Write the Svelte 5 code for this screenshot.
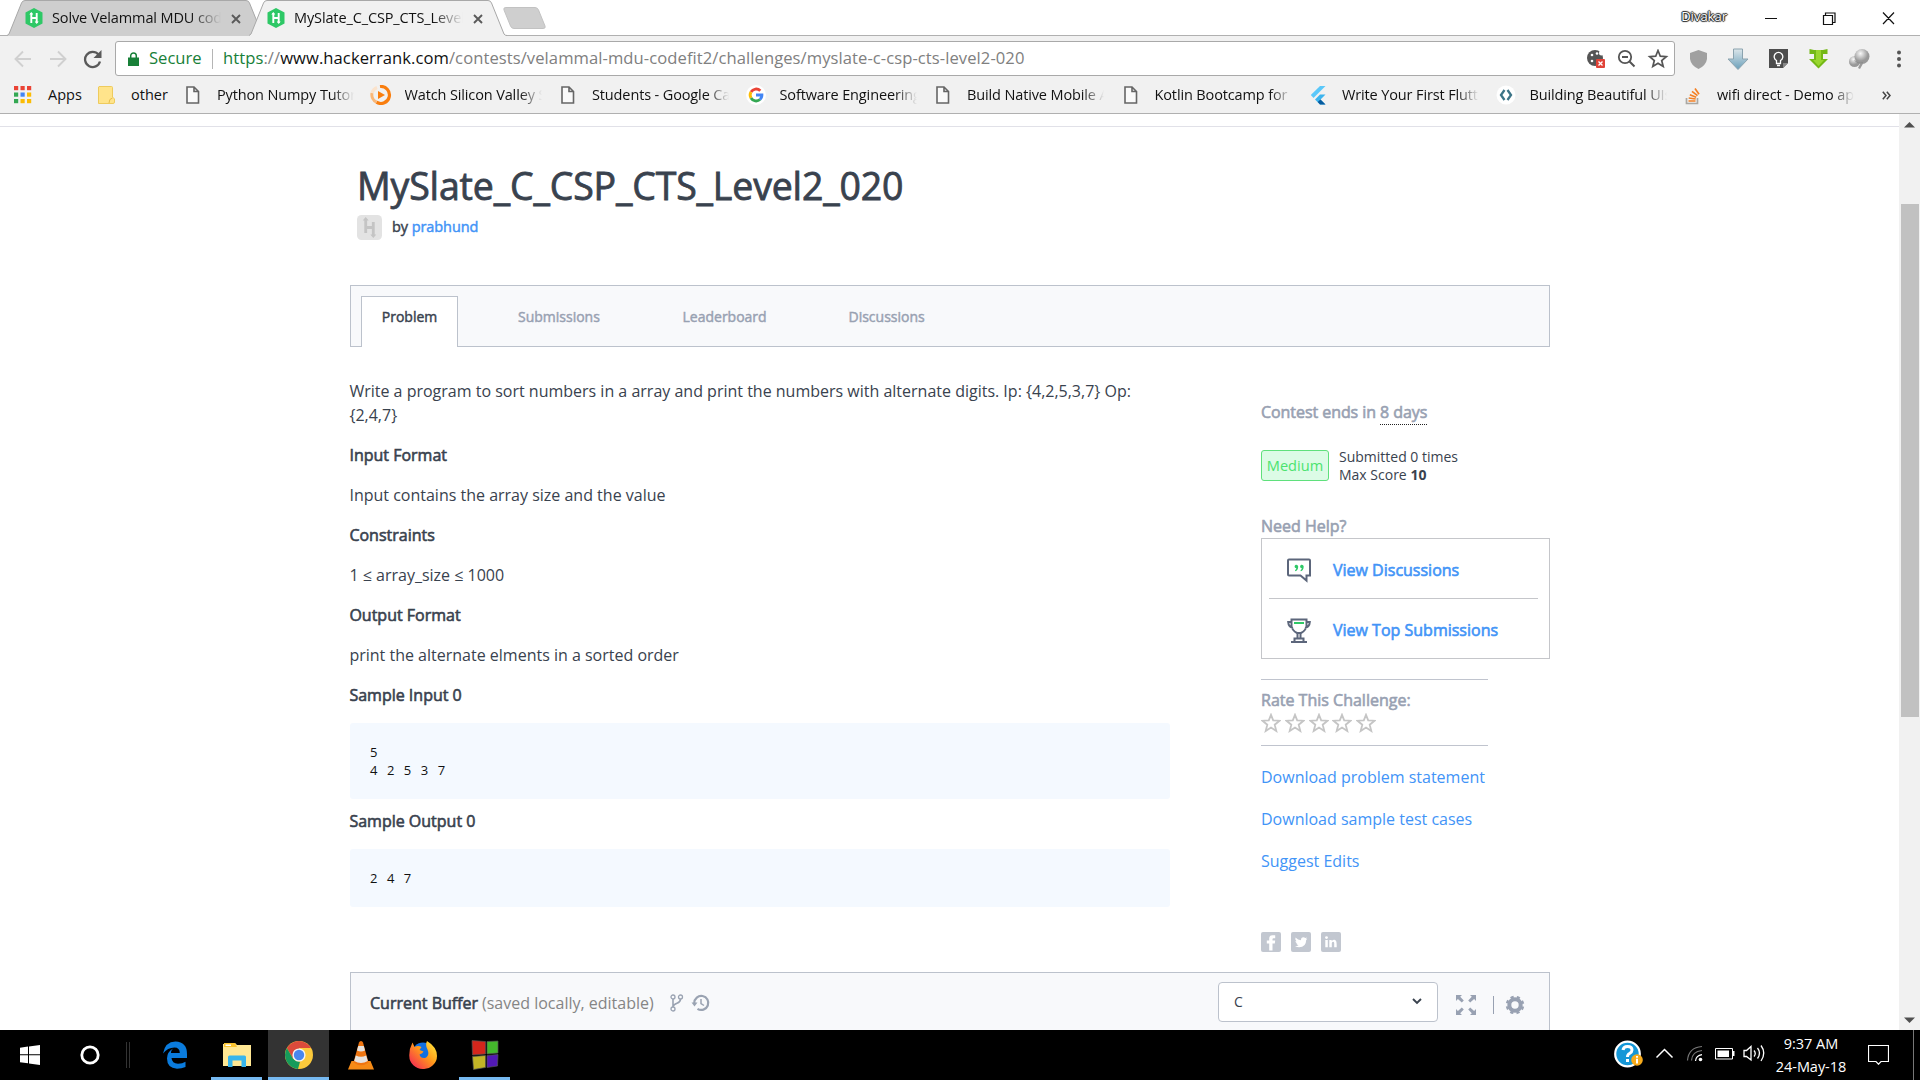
<script>
  const tabs = [
    { title: 'Solve Velammal MDU codefit', active: false },
    { title: 'MySlate_C_CSP_CTS_Level2', active: true }
  ];
  const bookmarks = [
    { icon: 'page', label: 'Python Numpy Tutorial' },
    { icon: 'watch', label: 'Watch Silicon Valley S' },
    { icon: 'page', label: 'Students - Google Cal' },
    { icon: 'google', label: 'Software Engineering' },
    { icon: 'page', label: 'Build Native Mobile Ap' },
    { icon: 'page', label: 'Kotlin Bootcamp for' },
    { icon: 'flutter', label: 'Write Your First Flutter' },
    { icon: 'code', label: 'Building Beautiful UIs' },
    { icon: 'stack', label: 'wifi direct - Demo app' }
  ];
  const gridColors = ['#ea4335', '#ea4335', '#ea4335', '#34a853', '#4285f4', '#fbbc05', '#34a853', '#fbbc05', '#fbbc05'];
  const sections = [
    { heading: 'Input Format', body: 'Input contains the array size and the value' },
    { heading: 'Constraints', body: '1 ≤ array_size ≤ 1000' },
    { heading: 'Output Format', body: 'print the alternate elments in a sorted order' }
  ];
</script>

<div class="screen">
  <header class="chrome">
    <div class="strip">
      {#each tabs as tab}
        <div class="tab" class:active={tab.active}>
          <svg class="shape" width="258" height="36" viewBox="0 0 258 36">
            <path d="M0 36 L2 34 L14.5 3 Q15.5 .5 18 .5 H239 Q241.500 .5 242.500 3 L255 34 L258 36Z" />
            <path class="edge" d="M0 35.500 L2 34 L14.500 3 Q15.500 .5 18 .5 H239 Q241.500 .5 242.500 3 L255 34 Q256 35.500 258 35.500" />
          </svg>
          <svg class="fav" width="20" height="20" viewBox="0 0 20 20">
            <path d="M10 0 L18.500 4.500 V15.500 L10 20 L1.500 15.500 V4.500Z" fill="#2ec866" />
            <path d="M7.300 5V15M12.700 5V15M7.300 10H12.700" stroke="#fff" stroke-width="1.900" fill="none" />
            <path d="M5.300 6.500 7.300 4 9.300 6.500ZM10.700 13.500 12.700 16 14.700 13.500Z" fill="#fff" />
          </svg>
          <span class="tabtitle">{tab.title}</span>
          <svg class="x" width="10" height="10" viewBox="0 0 10 10"><path d="M1 1 9 9M9 1 1 9" stroke="#5a5a5a" stroke-width="1.900" /></svg>
        </div>
      {/each}
      <svg class="newtab" width="44" height="22" viewBox="0 0 44 22"><path d="M3 .5H32Q34.500 .5 35.500 3L42 19Q43 21.500 40 21.500H11Q8.500 21.500 7.500 19L1 3Q0 .5 3 .5Z" fill="#cfcfcf" stroke="#c2c2c2" /></svg>
      <div class="winctl">
        <span class="user">Divakar</span>
        <svg width="130" height="14" viewBox="0 0 130 14" fill="none" stroke="#111" stroke-width="1.200">
          <path d="M0 7.500H12M58.500 4.500H67.500V13.500H58.500ZM60.500 4V2H70V11.500H68M118 1.500 129 13M129 1.500 118 13" />
        </svg>
      </div>
    </div>

    <div class="toolbar">
      <svg class="nav" width="88" height="20" viewBox="0 0 88 20" fill="none">
        <path d="M17 10H2M9 2.500 1.500 10 9 17.500M36 10H51M44 2.500 51.500 10 44 17.500" stroke="#d0d0d0" stroke-width="1.900" />
        <path d="M84.500 5.500A7.600 7.600 0 1 0 86 12.500" stroke="#5a5a5a" stroke-width="2.300" />
        <path d="M87.500 1V9H79.500Z" fill="#5a5a5a" />
      </svg>
      <div class="omnibox">
        <svg width="11" height="14" viewBox="0 0 11 14"><path d="M0 5.500H11V14H0Z" fill="#188038" /><path d="M2.700 6V3.700a2.800 2.800 0 0 1 5.600 0V6" fill="none" stroke="#188038" stroke-width="1.500" /></svg>
        <span class="secure">Secure</span>
        <span class="bar"></span>
        <span class="url"><span class="green">https</span>://<b>www.hackerrank.com</b>/contests/velammal-mdu-codefit2/challenges/myslate-c-csp-cts-level2-020</span>
        <svg class="actions" width="82" height="22" viewBox="0 0 82 22" fill="none">
          <circle cx="8" cy="9" r="8" fill="#555" />
          <circle cx="5" cy="6" r="1.300" fill="#fff" /><circle cx="10" cy="4.500" r="1.300" fill="#fff" /><circle cx="5" cy="12" r="1.300" fill="#fff" /><circle cx="14.500" cy="4" r="2.500" fill="#fff" />
          <rect x="9" y="10" width="9" height="9" rx="1" fill="#e04338" /><path d="M11.500 12.500l4 4m0-4-4 4" stroke="#fff" stroke-width="1.300" />
          <circle cx="38" cy="8" r="6.200" stroke="#555" stroke-width="1.800" /><path d="M35 8H41M42.500 12.500 47.500 17.500" stroke="#555" stroke-width="2" />
          <path d="M71 1.500 73.300 7.200 79.300 7.700 74.700 11.500 76.200 17.500 71 14.200 65.800 17.500 67.300 11.500 62.700 7.700 68.700 7.200Z" stroke="#555" stroke-width="1.700" />
        </svg>
      </div>
      <svg class="ext" width="216" height="24" viewBox="0 0 216 24">
        <defs>
          <linearGradient id="steel" x1="0" y1="0" x2="0" y2="1"><stop offset="0" stop-color="#dce6ea" /><stop offset="1" stop-color="#6a9fba" /></linearGradient>
          <radialGradient id="ball" cx=".4" cy=".3"><stop offset="0" stop-color="#f8f8f8" /><stop offset="1" stop-color="#999" /></radialGradient>
        </defs>
        <path d="M8.500 2 17 5V11Q16 17.500 8.500 21 1 17.500 0 11V5Z" fill="#a0a0a0" />
        <path d="M43.500 1H52.500V11H58L48 21.500 38 11H43.500Z" fill="url(#steel)" stroke="#8ba3af" />
        <path d="M79 1H98V15L93 20H79Z" fill="#4d4d4d" /><path d="M93 20V15H98Z" fill="#888" />
        <path d="M86.500 12.500a4.300 4.300 0 1 1 4 0V15.500h-4ZM87 17.500h3" fill="none" stroke="#fff" stroke-width="1.300" />
        <path d="M119.500 1 124 2H133L137.500 1V6H133V11H138L128.500 20.500 119 11H124V6H119.500Z" fill="#74b816" /><path d="M126 2H131V12H134L128.500 18 123 12H126Z" fill="#99d62e" />
        <path d="M168 20 171.500 13H174.500L170 21Z" fill="#9a9a9a" /><circle cx="164.500" cy="13.500" r="5.500" fill="url(#ball)" /><circle cx="172" cy="8.500" r="7.500" fill="url(#ball)" /><path d="M165 12.500Q167.500 16 173 14.500" fill="none" stroke="#8c8c8c" />
        <circle cx="209" cy="4.500" r="2" fill="#555" /><circle cx="209" cy="11" r="2" fill="#555" /><circle cx="209" cy="17.500" r="2" fill="#555" />
      </svg>
    </div>

    <div class="bookmarks">
      <svg class="apps" width="18" height="18" viewBox="0 0 18 18">
        {#each gridColors as c, i}<rect x={(i % 3) * 6.500} y={Math.floor(i / 3) * 6.500} width="4.200" height="4.200" fill={c} />{/each}
      </svg>
      <span class="appslabel">Apps</span>
      <svg class="folder" width="17" height="18" viewBox="0 0 17 18"><path d="M1 .5H13.500Q14.500 .5 14.500 1.500V11L16.500 13V16Q16.500 17.500 15 17.500H.5V1Z" fill="#ffe48b" stroke="#eecb5d" /><path d="M11 17Q11 12.500 14.500 12" fill="none" stroke="#e8bd4b" /></svg>
      <span class="otherlabel">other</span>
      {#each bookmarks as b}
        <div class="bm">
          <span class="bmicon">
            {#if b.icon === 'page'}
              <svg width="14" height="18" viewBox="0 0 14 18"><path d="M1 1H8L12.500 5.500V17H1ZM8 1V5.500H12.500" fill="#fafafa" stroke="#666" stroke-width="1.600" /></svg>
            {:else if b.icon === 'watch'}
              <svg width="22" height="20" viewBox="0 0 22 20"><path d="M6.500 17.200A8.500 8.500 0 1 0 10 1.500" fill="none" stroke="#f97e0f" stroke-width="3.200" /><path d="M6.500 17.200A8.500 8.500 0 0 1 2 8" fill="none" stroke="#fab777" stroke-width="3" /><path d="M2 8A8.500 8.500 0 0 1 7 2.500" fill="none" stroke="#fbe3cc" stroke-width="3" /><path d="M8 6 15 10 8 14Z" fill="#f97e0f" /></svg>
            {:else if b.icon === 'google'}
              <svg width="20" height="20" viewBox="0 0 20 20" fill="none" stroke-width="2.900"><circle cx="10" cy="10" r="10" fill="#fff" /><path d="M14.300 5.800A5.900 5.900 0 0 0 5 7" stroke="#ea4335" /><path d="M5 7A5.900 5.900 0 0 0 5 13" stroke="#fbbc05" /><path d="M5 13A5.900 5.900 0 0 0 14 14.500" stroke="#34a853" /><path d="M14 14.500A6 6 0 0 0 15.900 10H10" stroke="#4285f4" /></svg>
            {:else if b.icon === 'flutter'}
              <svg width="16" height="20" viewBox="0 0 16 20"><path d="M10 1H15.500L3.500 13 .8 10Z" fill="#5ac8fa" /><path d="M10 9.500H15.500L10.500 14.500 15.500 19.500H10L5 14.500Z" fill="#3cb4ee" /><path d="M7.700 17 10.500 14.500 15.500 19.500H10Z" fill="#075b9e" /></svg>
            {:else if b.icon === 'code'}
              <svg width="20" height="20" viewBox="0 0 20 20"><circle cx="10" cy="10" r="9.500" fill="#fff" /><path d="M8.500 5 5 10 8.500 15M11.500 5 15 10 11.500 15" fill="none" stroke="#3c7487" stroke-width="2.300" /></svg>
            {:else}
              <svg width="16" height="19" viewBox="0 0 16 19" fill="none"><path d="M1.500 12V17.500H12.500V12" stroke="#aaa8a3" stroke-width="1.700" /><path d="M3.500 15H10.500M3.700 12 10.700 13M4.800 8.700 11.200 11.300M7 5.300 12.500 9.700M10 2.500 14 8.200" stroke="#f48024" stroke-width="1.700" /></svg>
            {/if}
          </span>
          <span class="bmlabel">{b.label}</span>
        </div>
      {/each}
      <svg class="more" width="9" height="9" viewBox="0 0 9 9"><path d="M.8 .8 4 4.500 .8 8.200M4.800 .8 8 4.500 4.800 8.200" fill="none" stroke="#444" stroke-width="1.500" /></svg>
    </div>
  </header>

  <div class="viewport">
    <main class="page">
      <div class="topline"></div>
      <div class="container">
        <h1>MySlate_C_CSP_CTS_Level2_020</h1>
        <div class="author">
          <svg width="25" height="25" viewBox="0 0 25 25"><rect width="25" height="25" rx="4.500" fill="#e3e3e3" /><path d="M8.700 5V18M16.300 7V20M8.700 12.500H16.300" stroke="#c4c4c4" stroke-width="2.800" fill="none" /><path d="M5.700 5.500 8.700 2 11.700 5.500ZM13.300 19.500 16.300 23 19.300 19.500Z" fill="#c4c4c4" /></svg>
          <span>by <a href="#author">prabhund</a></span>
        </div>
        <nav class="navtabs">
          <span class="current">Problem</span><span class="submissions">Submissions</span><span class="leader">Leaderboard</span><span class="disc">Discussions</span>
        </nav>

        <div class="cols">
          <article>
            <p>Write a program to sort numbers in a array and print the numbers with alternate digits. Ip: {'{'}4,2,5,3,7{'}'} Op:<br />{'{'}2,4,7{'}'}</p>
            {#each sections as s}
              <h2>{s.heading}</h2>
              <p>{s.body}</p>
            {/each}
            <h2>Sample Input 0</h2>
            <pre>5
4 2 5 3 7</pre>
            <h2 class="out">Sample Output 0</h2>
            <pre>2 4 7</pre>
          </article>

          <aside>
            <div class="ends">Contest ends in <span>8 days</span></div>
            <div class="meta">
              <span class="badge">Medium</span>
              <div class="score">Submitted 0 times<br />Max Score <b>10</b></div>
            </div>
            <div class="need">Need Help?</div>
            <div class="help">
              <div class="row">
                <svg width="24" height="25" viewBox="0 0 24 25"><path d="M2 1.500H22Q23 1.500 23 2.500V17.500H19.500V22.500L13.500 17.500H2Q1 17.500 1 16.500V2.500Q1 1.500 2 1.500Z" fill="none" stroke="#5c667b" stroke-width="2" /><path d="M8 9.700a1.800 1.800 0 1 1 3.200-1Q11 12.500 8.300 13.200L8 12.200Q9.300 11.500 9.300 10.300ZM13.500 9.700a1.800 1.800 0 1 1 3.200-1Q16.500 12.500 13.800 13.200L13.500 12.200Q14.800 11.500 14.800 10.300Z" fill="#2ec866" /></svg>
                <a href="#discussions">View Discussions</a>
              </div>
              <div class="rule"></div>
              <div class="row">
                <svg width="24" height="25" viewBox="0 0 24 25" fill="none" stroke="#5c667b" stroke-width="2"><path d="M4.500 1.500H19.500V8Q19 12.500 14 15H10Q5 12.500 4.500 8ZM4.500 4H1.200Q1.500 9 6 10M19.500 4H22.800Q22.500 9 18 10M10.500 15.500V20M13.500 15.500V20M7.500 24V20.500H16.500V24M4 24H20" /><path d="M7 5H17" stroke="#2ec866" /></svg>
                <a href="#top">View Top Submissions</a>
              </div>
            </div>
            <div class="rate">
              <div>Rate This Challenge:</div>
              <div class="stars">
                {#each Array(5) as _}
                  <svg width="20" height="20" viewBox="0 0 20 20"><path d="M10 1.800 12.200 7.300 18.600 7.700 13.700 11.700 15.300 18 10 14.500 4.700 18 6.300 11.700 1.400 7.700 7.800 7.300Z" fill="none" stroke="#c5c5c5" stroke-width="1.800" /></svg>
                {/each}
              </div>
            </div>
            <div class="links">
              <a href="#statement">Download problem statement</a>
              <a href="#cases">Download sample test cases</a>
              <a href="#edits">Suggest Edits</a>
            </div>
            <div class="social">
              <svg width="20" height="20" viewBox="0 0 20 20"><rect width="20" height="20" rx="2" fill="#c2c7d0" /><path d="M8.200 18.500V11.500H5.800V8.500H8.200V6.500Q8.200 3.200 11.500 3.200H14.200V6.200H12.500Q11.500 6.200 11.500 7.300V8.500H14.200L13.800 11.500H11.500V18.500Z" fill="#fff" /></svg>
              <svg width="20" height="20" viewBox="0 0 20 20"><rect width="20" height="20" rx="2" fill="#c2c7d0" /><path d="M4.500 5.500Q7 8 10 8.200 9.800 5.200 12.500 5.200 13.500 5.200 14.300 6L16 5.500 15 7 16.300 6.800 15.200 8Q15 15.200 8.200 15.300 6 15.300 4 14.200 6.300 14.200 7.500 13.200 5.800 12.900 5.200 11.500H6.400Q4.400 10.600 4.400 9L5.500 9.300Q3.700 7.500 4.500 5.500Z" fill="#fff" /></svg>
              <svg width="20" height="20" viewBox="0 0 20 20"><rect width="20" height="20" rx="2" fill="#c2c7d0" /><path d="M4.300 8H6.800V15.300H4.300ZM8.300 8H10.700V9Q13.500 6.500 15.200 9.200 15.700 10.300 15.700 15.300H13.200V11Q13 9.800 12 9.800 10.800 10 10.800 11.200V15.300H8.300Z" fill="#fff" /><circle cx="5.500" cy="5.600" r="1.400" fill="#fff" /></svg>
            </div>
          </aside>
        </div>

        <div class="editor">
          <span class="buffer">Current Buffer</span>
          <span class="saved">(saved locally, editable)</span>
          <svg class="branch" width="42" height="18" viewBox="0 0 42 18" fill="none" stroke="#9aa3b2">
            <circle cx="4" cy="3" r="2" stroke-width="1.300" /><circle cx="4" cy="15" r="2" stroke-width="1.300" /><circle cx="11.500" cy="3" r="2" stroke-width="1.300" />
            <path d="M4 5V13M11.500 5Q11.500 8 8 9.200 4.500 10.500 4.200 12.500" stroke-width="1.600" />
            <path d="M25.300 9A7 7 0 1 1 28.500 14.800" stroke-width="2.200" /><path d="M32 5V9.500L35 11.500" stroke-width="1.500" /><path d="M22.500 8.500H28.500L25.500 12.500Z" fill="#9aa3b2" stroke="none" />
          </svg>
          <div class="select"><span>C</span><svg width="10" height="7" viewBox="0 0 10 7"><path d="M1 1 5 5 9 1" fill="none" stroke="#39424e" stroke-width="1.900" /></svg></div>
          <svg class="expand" width="20" height="20" viewBox="0 0 20 20" fill="#98a1b2"><path d="M0 0H6L4.200 1.800 7.800 5.400 5.800 7.400 1.900 3.900 0 6ZM20 0V6L18.100 3.900 14.200 7.400 12.200 5.400 15.800 1.800 14 0ZM0 20V14L1.900 16.100 5.800 12.600 7.800 14.600 4.200 18.200 6 20ZM20 20H14L15.800 18.200 12.200 14.600 14.200 12.600 18.100 16.100 20 14Z" /></svg>
          <span class="sep"></span>
          <svg class="gear" width="20" height="20" viewBox="0 0 20 20" fill="none" stroke="#98a1b2"><circle cx="10" cy="10" r="5.700" stroke-width="4" /><circle cx="10" cy="10" r="8.200" stroke-width="2.200" stroke-dasharray="3.220 3.220" stroke-dashoffset="-1.600" /></svg>
        </div>
      </div>
    </main>
    <div class="scroll">
      <svg width="11" height="6" viewBox="0 0 11 6"><path d="M0 5.500 5.500 0 11 5.500Z" fill="#505050" /></svg>
      <div class="track"><div class="thumb"></div></div>
      <svg width="11" height="6" viewBox="0 0 11 6"><path d="M0 .5 5.500 6 11 .5Z" fill="#505050" /></svg>
    </div>
  </div>

  <footer class="taskbar">
    <div class="task start"><svg width="20" height="20" viewBox="0 0 20 20"><path d="M0 2.800 8 1.600V9.300H0ZM9 1.500 20 0V9.300H9ZM0 10.300H8V18.300L0 17.200ZM9 10.300H20V20L9 18.500Z" fill="#fff" /></svg></div>
    <div class="task start"><svg width="20" height="20" viewBox="0 0 20 20"><circle cx="10" cy="10" r="8.200" fill="none" stroke="#fff" stroke-width="2.800" /></svg></div>
    <div class="grip"></div>
    <div class="task"><svg width="26" height="28" viewBox="0 0 26 28"><path d="M1 12.500Q3 .8 13.500 .5 25 1 25 13V17H9.500Q10 22.500 16 22.700 20.500 22.700 23.500 20.800V26Q19.500 27.700 15 27.700 5 27 5 17.500 5 11 11 7.500 9 9.500 9 12H17.800Q17.700 6.500 12.500 6.500 5.500 6.500 1 12.500Z" fill="#0a7bdc" /></svg></div>
    <div class="task open"><svg width="28" height="26" viewBox="0 0 28 26"><path d="M0 2H3L4 1H12L14 3H28V24H0Z" fill="#ffe793" /><path d="M1 1H12L14 5H1Z" fill="#fbc42f" /><path d="M2.500 2.500H8V4H2.500Z" fill="#fff" /><path d="M5 15Q5 13.500 6.500 13.500H21.500Q23 13.500 23 15V25H18.500V18.500H9.500V25H5Z" fill="#37b5ec" /></svg></div>
    <div class="task selected"><svg width="28" height="28" viewBox="0 0 28 28"><circle cx="14" cy="14" r="14" fill="#fbc93b" /><path d="M14 14 7.900 17.500 1.900 7A14 14 0 0 1 26.100 7H14Z" fill="#db4a3b" /><path d="M1.900 7 7.900 17.500Q11 21 15 20.800L13 28A14 14 0 0 1 1.900 7Z" fill="#169b5b" /><circle cx="14" cy="14" r="6.600" fill="#f3f3f3" /><circle cx="14" cy="14" r="5.200" fill="#4886ed" /></svg></div>
    <div class="task"><svg width="26" height="29" viewBox="0 0 26 29"><path d="M3.500 20H22.500L26 28.500H0Z" fill="#f68b16" /><path d="M13 0Q14.500 0 15 1.500L20.500 21.500Q13 27 5.500 21.500L11 1.500Q11.500 0 13 0Z" fill="#ef7510" /><path d="M10.200 5H15.800L17 9.500Q13 11.500 9 9.500ZM7.800 14.500Q13 17 18.200 14.500L19.800 20Q13 24 6.200 20Z" fill="#e6e3df" /></svg></div>
    <div class="task"><svg width="28" height="28" viewBox="0 0 28 28"><defs><linearGradient id="fox" x1="1" y1="0" x2="0" y2="1"><stop offset="0" stop-color="#fff13f" /><stop offset=".45" stop-color="#ff9a1a" /><stop offset="1" stop-color="#f3165e" /></linearGradient></defs><circle cx="14" cy="12.500" r="11" fill="#116fe0" /><path d="M18 0Q28 6 28 15A13.500 13 0 0 1 14 28 13.500 13 0 0 1 .3 15Q0 8 3.500 1.500L5.500 6Q9 4 12.500 6L10.500 9 14.500 10.500Q14 12.500 10.500 13.500 11.500 17.500 16 17 21 15 18.500 8.500 16 4 18 0Z" fill="url(#fox)" /></svg></div>
    <div class="task open"><svg width="28" height="30" viewBox="0 0 28 30" stroke="#555" stroke-width=".7"><path d="M1 .5 14.500 1.500V14L1.500 15Z" fill="#d3261c" /><path d="M16 1.500 27 1V13L16 14Z" fill="#44b82c" /><path d="M1.500 16.500 14.500 15.500V27.500L2.500 29.500Z" fill="#c2b526" /><path d="M16 15.500 27 14.500 26.500 26 16 27.500Z" fill="#5219b5" /></svg></div>
    <div class="tray">
      <svg width="155" height="30" viewBox="0 0 155 30" fill="none">
        <circle cx="13.500" cy="14" r="12.300" fill="#1597d7" stroke="#fff" stroke-width="2.200" />
        <path d="M9 10Q9.500 6.500 13.500 6.500 18 6.500 18 10 18 12 15.500 13.500 13.500 14.500 13.500 17M13.500 19V22" stroke="#fff" stroke-width="3" />
        <circle cx="23" cy="20" r="5.800" fill="#f7ab1c" /><path d="M23 18.800V23.500M23 16V17.700" stroke="#fff" stroke-width="2" />
        <path d="M42.500 17.500 50.500 9.500 58.500 17.500" stroke="#fff" stroke-width="1.500" />
        <path d="M73.500 20.500Q74.500 7.500 88 6.500M77.500 20.500Q78 11.500 88 10.500" stroke="#777" stroke-width="1.200" /><path d="M81.500 21Q82 15.500 88 14.700" stroke="#fff" stroke-width="1.200" /><circle cx="86.500" cy="19.500" r="1.800" fill="#fff" />
        <path d="M101.500 8.500H118.500V19H101.500Z" stroke="#fff" /><path d="M103.500 10.500H115V17H103.500Z" fill="#fff" /><path d="M119.500 11V16" stroke="#fff" stroke-width="2" />
        <path d="M130 10.500H132.500L137 6.500V20L132.500 16.500H130ZM140 10.500Q142.500 13.500 140 16.500M143.500 8Q147.500 13 143.500 18.500M147 5.500Q152.500 13 147 21" stroke="#fff" stroke-width="1.300" />
      </svg>
      <div class="clock"><span>9:37 AM</span><span>24-May-18</span></div>
      <svg class="note" width="21" height="20" viewBox="0 0 21 20"><path d="M.5 .5H20.500V16.500H13L10.500 19.200 8 16.500H.5Z" fill="none" stroke="#fff" stroke-width="1.200" /></svg>
      <div class="desktop"></div>
    </div>
  </footer>
</div>

<style>
  :global(body) { margin: 0; overflow: hidden; }
  .screen { width: 1920px; height: 1080px; display: flex; flex-direction: column; overflow: hidden; background: #fff; font-family: "Open Sans", "Noto Sans", sans-serif; color: #39424e; }
  .screen :global(*) { box-sizing: border-box; }
  svg { display: block; flex: none; }
  a { color: #4294f7; text-decoration: none; }

  .chrome { height: 114px; flex: none; background: #f1f1f1; border-bottom: 1px solid #b0b0b0; color: #111; white-space: nowrap; }
  .strip { height: 36px; background: #fff; box-shadow: inset 0 -1px #b0b0b0; display: flex; align-items: center; padding-left: 7px; }
  .tab { position: relative; width: 258px; height: 36px; margin-right: -16px; padding-left: 17px; display: flex; align-items: center; flex: none; }
  .tab .shape { position: absolute; left: 0; top: 0; fill: #cecece; }
  .tab .edge { fill: none; stroke: #a8a8a8; stroke-width: 1; }
  .tab.active { z-index: 1; }
  .tab.active .shape { fill: #f1f1f1; }
  .tab.active .edge { fill: none; }
  .fav, .tabtitle, .x { position: relative; }
  .tabtitle { width: 169px; margin: 0 10px 0 8px; padding-bottom: 1px; overflow: hidden; font-size: 14.500px; line-height: 24px; letter-spacing: -.12px; mask-image: linear-gradient(90deg, #000 82%, transparent); }
  .x { margin-top: 2px; }
  .newtab { margin-left: 12px; }
  .winctl { margin-left: auto; display: flex; align-items: center; padding-right: 25px; gap: 38px; height: 32px; }
  .user { font-size: 13px; margin-top: -5px; color: #fff; letter-spacing: 0; text-shadow: 0 0 1px #222, 1px 0 1px #222, -1px 0 1px #222, 0 1px 1px #222, 0 -1px 1px #222; }

  .toolbar { height: 41px; padding: 5px 0 0 14px; display: flex; }
  .nav { margin: 8px 13px 0 0; }
  .omnibox { width: 1560px; height: 35px; border: 1px solid #a9a9a9; border-radius: 3px; background: #fff; display: flex; align-items: center; padding-left: 12px; font-size: 16.600px; line-height: 22px; }
  .secure { margin: -1px 0 0 10px; width: 52px; color: #188038; }
  .bar { width: 1px; height: 20px; background: #b5b5b5; margin: 0 10px 0 11px; }
  .url { margin-top: -1px; color: #808080; letter-spacing: .065px; }
  .url b { font-weight: 400; color: #111; }
  .green { color: #188038; }
  .actions { margin: 2px 5px 0 auto; }
  .ext { margin: 7px 0 0 15px; }

  .bookmarks { height: 36px; display: flex; align-items: center; font-size: 14.500px; line-height: 24px; padding-left: 14px; }
  .appslabel { margin-left: 16px; width: 50px; }
  .otherlabel { margin-left: 16px; width: 53px; }
  .bm { width: 187.500px; display: flex; align-items: center; flex: none; }
  .bmicon { width: 18px; display: flex; justify-content: center; margin-right: 15px; }
  .bmlabel { width: 137px; overflow: hidden; letter-spacing: -.13px; mask-image: linear-gradient(90deg, #000 84%, transparent); }
  .more { margin-left: 10px; }

  .viewport { height: 916px; flex: none; display: flex; overflow: hidden; }
  .page { width: 1899px; overflow: hidden; }
  .topline { height: 13px; border-bottom: 1px solid #e1e1e8; }
  .container { width: 1200px; margin-left: 350px; }
  h1 { margin: 34px 0 0 7px; height: 50px; line-height: 50px; font-size: 37.500px; letter-spacing: -.16px; font-weight: 400; white-space: nowrap; -webkit-text-stroke: .8px; }
  .author { height: 25px; margin: 4px 0 0 7px; display: flex; align-items: center; gap: 10px; font-size: 14.500px; letter-spacing: -.08px; -webkit-text-stroke: .45px; }
  .author span { margin-top: -2px; }
  .navtabs { margin-top: 45px; height: 62px; border: 1px solid #bcc2cc; background: #f8f9fb; display: flex; padding: 10px 0 0 10px; font-size: 14px; line-height: 41px; color: #98a1b2; -webkit-text-stroke: .45px; }
  .current { width: 97px; height: 51px; border: 1px solid #bcc2cc; border-bottom: 0; background: #fff; line-height: 39px; text-align: center; color: #39424e; }
  .submissions { margin-left: 60px; width: 164.500px; }
  .leader { width: 166px; }

  .cols { display: flex; height: 625px; }
  article { width: 820px; padding-top: 32px; font-size: 16px; line-height: 24px; }
  article p { margin: 0 0 16px -.6px; white-space: nowrap; }
  h2 { margin: 0 0 16px -.6px; font-size: 16px; line-height: 24px; font-weight: 400; -webkit-text-stroke: .6px; }
  pre { margin: 0; padding: 20px 20px; background: #f4f9ff; border-radius: 3px; font: 13px/18px "Open Sans", sans-serif; word-spacing: 6.100px; color: #111; }
  h2.out { margin-top: 10px; }
  aside { margin-left: 91px; width: 289px; padding-top: 51px; font-size: 16px; }
  .ends { line-height: 28px; color: #98a1b2; letter-spacing: -.06px; -webkit-text-stroke: .6px; }
  .ends span { display: inline-block; line-height: 23px; border-bottom: 1px dotted #222; }
  .meta { display: flex; height: 37px; margin-top: 21px; align-items: center; font-size: 14px; line-height: 18px; }
  .badge { width: 68px; height: 31px; line-height: 29px; border: 1px solid #5fe07c; border-radius: 3px; background: #dcfbe6; color: #4be36f; text-align: center; margin-right: 10px; font-size: 14.600px; }
  .need { margin-top: 30px; line-height: 24px; color: #98a1b2; -webkit-text-stroke: .6px; }
  .help { height: 121px; border: 1px solid #c5c6ca; }
  .row { height: 59px; display: flex; align-items: center; padding: 3px 0 0 25px; gap: 22px; -webkit-text-stroke: .6px; }
  .rule { height: 1px; margin: 0 11px 0 7px; background: #c5c6ca; }
  .rate { width: 227px; height: 67px; margin-top: 20px; padding-top: 8px; border-top: 1px solid #c0c4ce; border-bottom: 1px solid #c0c4ce; color: #98a1b2; line-height: 24px; -webkit-text-stroke: .6px; }
  .stars { display: flex; gap: 3.800px; margin-top: 1px; }
  .links { display: flex; flex-direction: column; margin-top: 10px; line-height: 42px; white-space: nowrap; }
  .social { display: flex; gap: 10px; margin-top: 50px; }
  .editor { height: 70px; border: 1px solid #bcc2cc; background: #f8f9fb; display: flex; align-items: center; padding: 0 24px 9px 19px; font-size: 16px; line-height: 24px; }
  .buffer { width: 112px; -webkit-text-stroke: .6px; white-space: nowrap; }
  .saved { color: #858585; width: 187px; white-space: nowrap; }
  .select { margin: 0 0 2px auto; width: 220px; height: 40px; border: 1px solid #bcc2cc; border-radius: 4px; background: #fff; display: flex; align-items: center; justify-content: space-between; padding: 0 15px; font-size: 14px; }
  .expand { margin: 5px 17px 0 18px; }
  .sep { width: 1px; height: 18px; background: #98a1b2; margin: 5px 11px 0 0; }
  .gear { margin-top: 5px; }
  .scroll { width: 21px; background: #f1f1f1; display: flex; flex-direction: column; align-items: center; padding: 8px 0 7px; }
  .track { flex: 1; width: 18px; padding-top: 76px; }
  .thumb { height: 513px; background: #c1c1c1; }

  .taskbar { height: 50px; flex: none; background: #000; display: flex; align-items: stretch; }
  .task { width: 61px; margin-right: 1px; display: flex; align-items: center; justify-content: center; flex: none; }
  .start { width: 60px; margin-right: 0; }
  .open { background: linear-gradient(#76b9f1, #76b9f1) center bottom / 51px 3px no-repeat; }
  .selected { background: #333; border-bottom: 3px solid #76b9f1; padding-top: 3px; }
  .grip { width: 4px; height: 26px; margin: 12px 14px 0 6px; border: solid #333; border-width: 0 1px; }
  .tray { margin-left: auto; display: flex; align-items: center; color: #fff; }
  .clock { width: 84px; display: flex; flex-direction: column; align-items: center; font-size: 14.500px; letter-spacing: -.05px; line-height: 23px; }
  .clock span { white-space: nowrap; }
  .note { margin: 0 24px 0 15px; }
  .desktop { width: 7px; height: 50px; border-left: 1px solid #777; }
</style>
